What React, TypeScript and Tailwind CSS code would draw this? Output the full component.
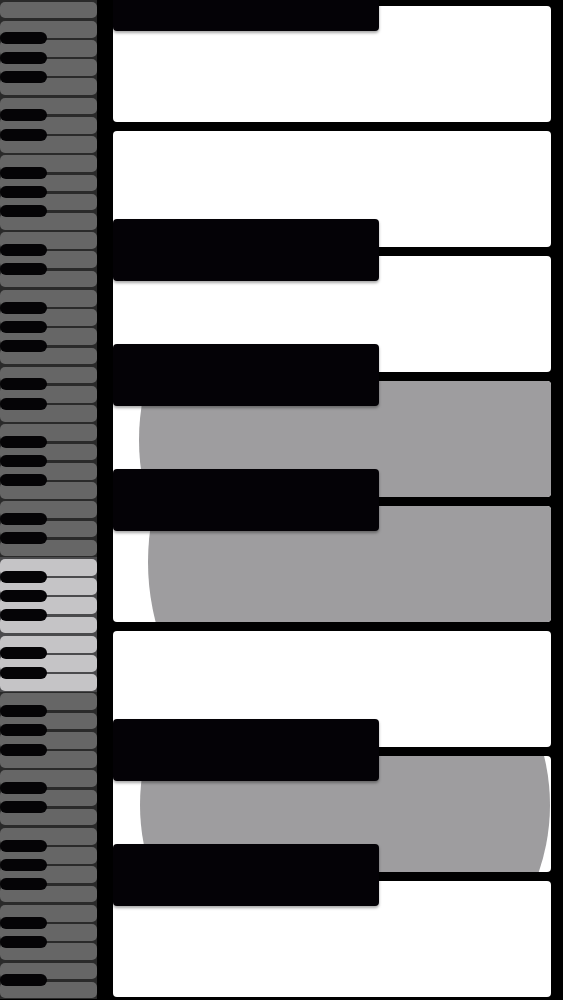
import React from "react";

const MINI_COUNT = 52;
const HIGHLIGHT_START = 29;
const HIGHLIGHT_END = 35;

function MiniKey({ i }: { i: number }) {
  const lit = i >= HIGHLIGHT_START && i <= HIGHLIGHT_END;
  const hasBlackBelow = i < MINI_COUNT - 1 && [1, 2, 3, 5, 6].includes(i % 7);
  return (
    <div className={`relative h-[19.23px] shrink-0 pt-[1.6px] ${lit ? "bg-[#4a4a4c]" : "bg-[#2a2a2a]"}`}>
      <div className={`h-[16.7px] rounded-[5px] ${lit ? "bg-[#c5c4c6]" : "bg-[#666666]"}`} />
      {hasBlackBelow && (
        <div className="absolute left-0 bottom-[-6px] z-10 h-[12px] w-[47px] rounded-full bg-[#050406]" />
      )}
    </div>
  );
}

type Ripple = { left: number; top: number; size: number } | null;

const SLOTS: { black: boolean; ripple: Ripple }[] = [
  { black: true, ripple: null },
  { black: false, ripple: null },
  { black: true, ripple: null },
  { black: true, ripple: { left: 26.5, top: -168, size: 454 } },
  { black: true, ripple: { left: 35.5, top: -184, size: 480 } },
  { black: false, ripple: null },
  { black: true, ripple: { left: 27.5, top: -156, size: 410 } },
  { black: true, ripple: null },
];

export default function App() {
  return (
    <div className="flex h-[1000px] w-[563px] overflow-hidden bg-black">
      <div className="flex w-[97px] shrink-0 flex-col">
        {Array.from({ length: MINI_COUNT }, (_, i) => (
          <MiniKey key={i} i={i} />
        ))}
      </div>
      <div className="ml-[15.5px] flex w-[438px] shrink-0 flex-col">
        {SLOTS.map((s, k) => (
          <div key={k} className="relative h-[125px] shrink-0 pt-[6.3px]">
            <div className="relative h-[115.5px] overflow-hidden rounded-[4px] bg-white shadow-[0_1px_2px_rgba(0,0,0,0.3)]">
              {s.ripple && (
                <div
                  className="absolute rounded-full bg-[#9e9d9f]"
                  style={{
                    left: s.ripple.left,
                    top: s.ripple.top,
                    width: s.ripple.size,
                    height: s.ripple.size,
                  }}
                />
              )}
            </div>
            {s.black && (
              <div className="absolute left-0 top-[-31.5px] z-10 h-[62.6px] w-[266px] rounded-[4px] bg-[#040206] shadow-[0_2px_3px_rgba(0,0,0,0.35)]" />
            )}
          </div>
        ))}
      </div>
    </div>
  );
}
